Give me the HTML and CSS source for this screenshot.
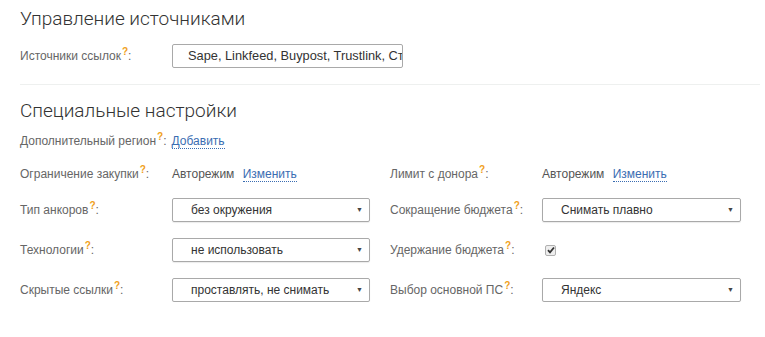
FILE: index.html
```html
<!DOCTYPE html>
<html>
<head>
<meta charset="utf-8">
<meta name="viewport" content="width=device-width, initial-scale=1.0">
<link rel="stylesheet" href="styles.css">
<title>Настройки проекта</title>
</head>
<body>
<div class="page">

  <h2 class="section_title">Управление источниками</h2>
  <div class="source_row">
    <div class="field_label">Источники ссылок<span class="hint">?</span>:</div>
    <div class="text_box">Sape, Linkfeed, Buypost, Trustlink, Ст</div>
  </div>

  <div class="divider"></div>

  <h2 class="section_title">Специальные настройки</h2>
  <div class="region_row">
    <span class="field_label">Дополнительный регион<span class="hint">?</span>:</span>
    <a class="dotted_link" href="#">Добавить</a>
  </div>

  <div class="settings_grid">
    <div class="field_label row_text">Ограничение закупки<span class="hint">?</span>:</div>
    <div class="field_value row_text">Авторежим <a class="dotted_link" href="#">Изменить</a></div>
    <div class="field_label row_text">Лимит с донора<span class="hint">?</span>:</div>
    <div class="field_value row_text">Авторежим <a class="dotted_link" href="#">Изменить</a></div>

    <div class="field_label">Тип анкоров<span class="hint">?</span>:</div>
    <div class="select_box left_sel">без окружения<span class="arrow">▼</span></div>
    <div class="field_label">Сокращение бюджета<span class="hint">?</span>:</div>
    <div class="select_box">Снимать плавно<span class="arrow">▼</span></div>

    <div class="field_label">Технологии<span class="hint">?</span>:</div>
    <div class="select_box left_sel">не использовать<span class="arrow">▼</span></div>
    <div class="field_label">Удержание бюджета<span class="hint">?</span>:</div>
    <div><span class="check_box"><svg width="8" height="8" viewBox="0 0 8 8"><path d="M1 4.2 L3 6.3 L7 1.5" fill="none" stroke="#333" stroke-width="1.8"/></svg></span></div>

    <div class="field_label">Скрытые ссылки<span class="hint">?</span>:</div>
    <div class="select_box left_sel">проставлять, не снимать<span class="arrow">▼</span></div>
    <div class="field_label">Выбор основной ПС<span class="hint">?</span>:</div>
    <div class="select_box">Яндекс<span class="arrow">▼</span></div>
  </div>

</div>
</body>
</html>
```

FILE: styles.css
```css
body {
    margin: 0;
    background-color: white;
    font-family: "Liberation Sans", Arial, sans-serif;
    font-size: 12px;
    color: #333;
}

.page {
    padding: 6px 5px 0 20px;
}

.section_title {
    margin: 0;
    font-family: Roboto, "Liberation Sans", sans-serif;
    font-weight: 300;
    font-size: 19px;
    line-height: 26px;
    color: #333;
}

.field_label {
    color: #666;
}

.hint {
    color: #f0a020;
    font-weight: bold;
    font-size: 10px;
    position: relative;
    top: -5px;
    margin-left: 1px;
}

.source_row {
    display: flex;
    align-items: center;
    margin-top: 12px;
}

.source_row .field_label {
    width: 152px;
}

.text_box {
    width: 214px;
    height: 22px;
    line-height: 22px;
    padding-left: 15px;
    border: 1px solid #a9a9a9;
    border-radius: 2px;
    font-size: 12.8px;
    color: #333;
    overflow: hidden;
    white-space: nowrap;
}

.divider {
    height: 1px;
    background-color: #eef0ef;
    margin: 16px 0 13px 0;
}

.region_row {
    display: flex;
    align-items: center;
    margin-top: 9px;
    height: 16px;
}

.region_row .field_label {
    margin-right: 5px;
}

.dotted_link {
    color: #3a6db2;
    text-decoration: none;
    border-bottom: 1px dotted #3a6db2;
    font-size: 12px;
}

.settings_grid {
    display: grid;
    grid-template-columns: 152px 218px 152px 199px;
    grid-auto-rows: 24px;
    grid-template-rows: 16px;
    row-gap: 16px;
    align-items: center;
    margin-top: 17px;
}

.field_value {
    color: #555;
    font-size: 12px;
}

.field_value .dotted_link {
    margin-left: 5px;
}

.select_box {
    position: relative;
    height: 22px;
    line-height: 22px;
    padding-left: 18px;
    border: 1px solid #a9a9a9;
    border-radius: 2px;
    box-shadow: 0 1px 1px rgba(0,0,0,0.08);
    font-size: 12px;
    color: #333;
}

.left_sel {
    width: 178px;
}

.arrow {
    position: absolute;
    right: 6px;
    top: 0;
    font-size: 7px;
    color: #444;
}

.check_box {
    display: inline-flex;
    align-items: center;
    justify-content: center;
    width: 9px;
    height: 9px;
    margin-left: 3px;
    border: 1px solid #b0b0b0;
    border-radius: 2px;
    background-color: #eee;
}
```
